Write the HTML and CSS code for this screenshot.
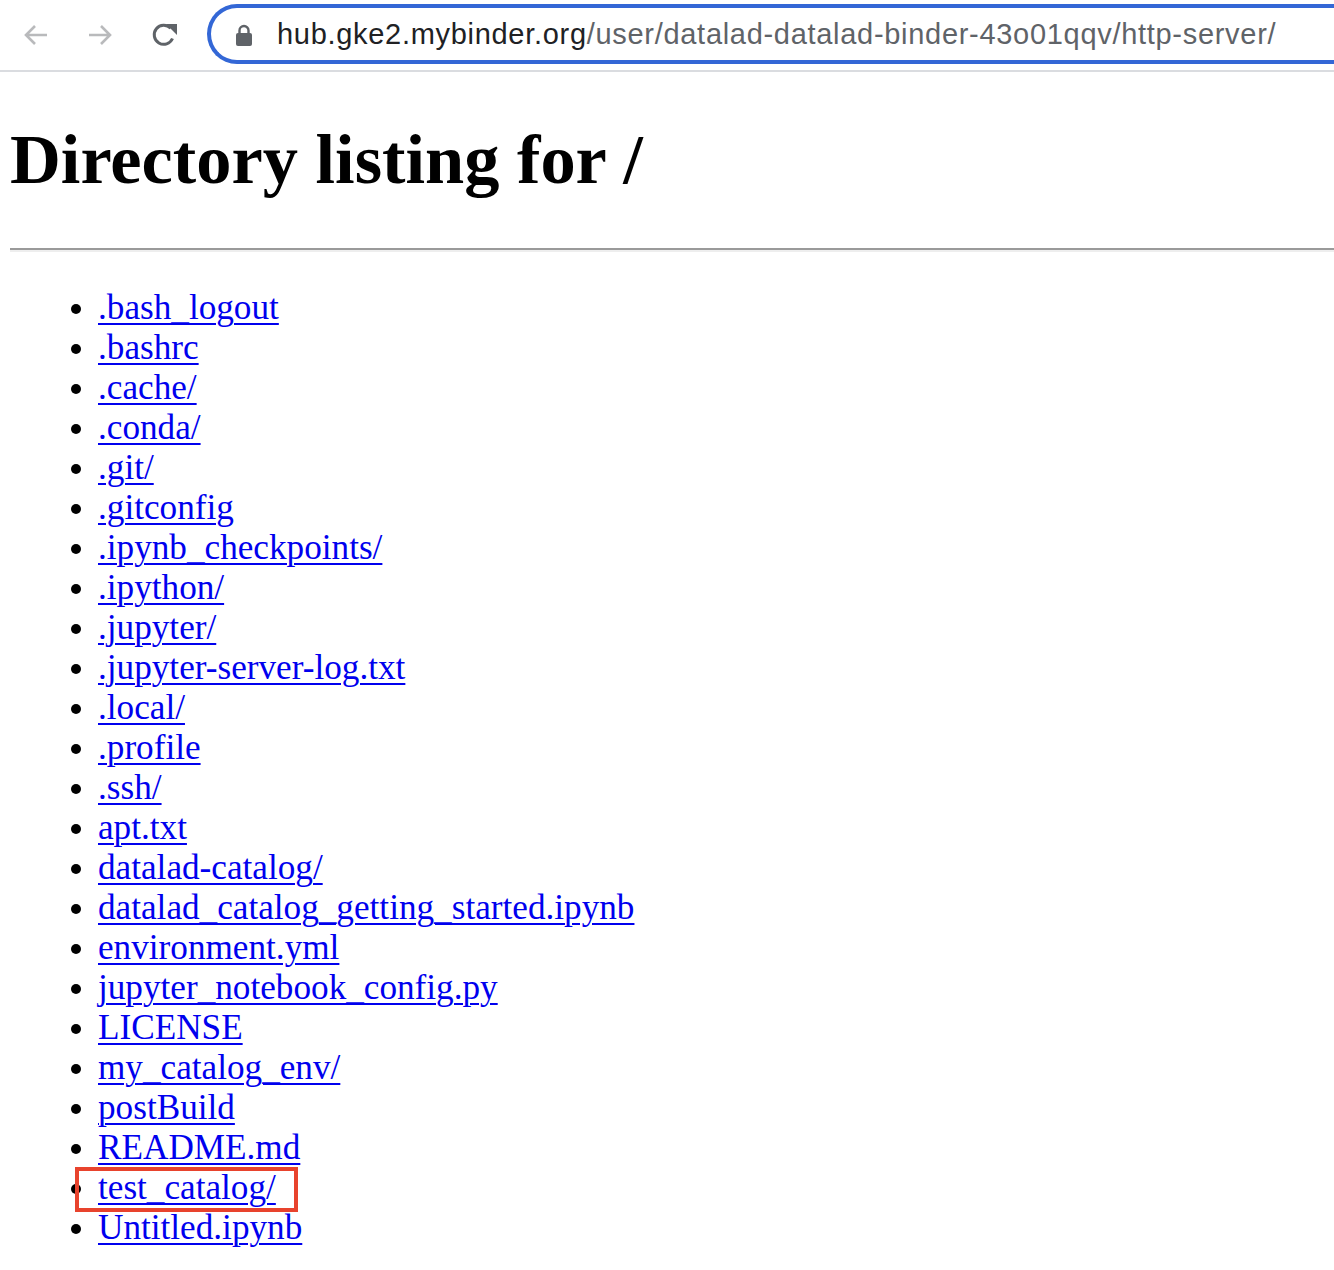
FILE: index.html
```html
<!DOCTYPE html>
<html lang="en">
<head>
<meta charset="utf-8">
<title>Directory listing for /</title>
<link rel="stylesheet" href="styles.css">
</head>
<body>
<header class="toolbar">
  <div class="nav">
    <svg class="icon back" width="32" height="32" viewBox="0 0 32 32"><path d="M27 16H6M15 7l-9 9 9 9" fill="none" stroke="#b9babc" stroke-width="2.6"/></svg>
    <svg class="icon fwd" width="32" height="32" viewBox="0 0 32 32"><path d="M5 16h21M17 7l9 9-9 9" fill="none" stroke="#b9babc" stroke-width="2.6"/></svg>
    <svg class="icon reload" width="32" height="32" viewBox="0 0 32 32"><path d="M24.5 19.5A9.5 9.5 0 1 1 22.7 9.3" fill="none" stroke="#5f6368" stroke-width="3"/><path d="M18 5h11v11z" fill="#5f6368"/></svg>
  </div>
  <div class="omnibox">
    <svg class="lock" width="16" height="22" viewBox="0 0 16 22"><path d="M3.5 9V6.5a4.5 4.5 0 0 1 9 0V9" fill="none" stroke="#5f6368" stroke-width="2.4"/><rect x="0" y="9" width="16" height="13" rx="2" fill="#5f6368"/></svg>
    <span class="url"><span class="host">hub.gke2.mybinder.org</span>/user/datalad-datalad-binder-43o01qqv/http-server/</span>
  </div>
</header>
<main class="page">
  <h1 class="title">Directory listing for /</h1>
  <hr class="rule">
  <ul class="listing">
    <li><a href="#">.bash_logout</a></li>
    <li><a href="#">.bashrc</a></li>
    <li><a href="#">.cache/</a></li>
    <li><a href="#">.conda/</a></li>
    <li><a href="#">.git/</a></li>
    <li><a href="#">.gitconfig</a></li>
    <li><a href="#">.ipynb_checkpoints/</a></li>
    <li><a href="#">.ipython/</a></li>
    <li><a href="#">.jupyter/</a></li>
    <li><a href="#">.jupyter-server-log.txt</a></li>
    <li><a href="#">.local/</a></li>
    <li><a href="#">.profile</a></li>
    <li><a href="#">.ssh/</a></li>
    <li><a href="#">apt.txt</a></li>
    <li><a href="#">datalad-catalog/</a></li>
    <li><a href="#">datalad_catalog_getting_started.ipynb</a></li>
    <li><a href="#">environment.yml</a></li>
    <li><a href="#">jupyter_notebook_config.py</a></li>
    <li><a href="#">LICENSE</a></li>
    <li><a href="#">my_catalog_env/</a></li>
    <li><a href="#">postBuild</a></li>
    <li><a href="#">README.md</a></li>
    <li class="marked"><a href="#">test_catalog/</a><span class="highlight"></span></li>
    <li><a href="#">Untitled.ipynb</a></li>
  </ul>
</main>
</body>
</html>
```
FILE: styles.css
```css
html, body {
  margin: 0;
  padding: 0;
  background: #ffffff;
}

body {
  width: 1334px;
  overflow: hidden;
}

.toolbar {
  height: 70px;
  border-bottom: 2px solid #dadce0;
  display: flex;
  align-items: center;
  background: #ffffff;
}

.nav {
  display: flex;
  align-items: center;
  gap: 32px;
  padding-left: 20px;
  width: 187px;
}

.icon {
  display: block;
}

.omnibox {
  flex: 1;
  height: 52px;
  margin-top: -3px;
  border: 4px solid #3367d6;
  border-right: none;
  border-radius: 30px 0 0 30px;
  display: flex;
  align-items: center;
  padding-left: 25px;
}

.lock {
  display: block;
  margin-right: 25px;
  margin-top: 2px;
}

.url {
  font-family: "Liberation Sans", Arial, sans-serif;
  font-size: 29px;
  letter-spacing: 0.7px;
  color: #5f6368;
  white-space: nowrap;
  margin-top: 2px;
}

.host {
  color: #202124;
}

.page {
  padding: 0 0 0 10px;
  font-family: "Liberation Serif", "Times New Roman", serif;
  font-size: 35.2px;
  color: #000;
}

.title {
  font-size: 70.4px;
  font-weight: bold;
  margin: 47px 0 48px 0;
  line-height: 81px;
}

.rule {
  margin: 0 0 36px 0;
  border: none;
  border-top: 2px solid #9a9a9a;
  border-bottom: 2px solid #eeeeee;
  height: 0;
}

.listing {
  margin: 0;
  padding-left: 88px;
  list-style: disc;
}

.listing li {
  line-height: 40px;
  position: relative;
}

.listing a {
  color: #0000ee;
  text-decoration: underline;
  text-decoration-thickness: 2px;
  text-underline-offset: 4px;
}

.highlight {
  position: absolute;
  left: -23px;
  top: -1px;
  width: 215px;
  height: 37px;
  border: 4px solid #e8432d;
  pointer-events: none;
}
```
